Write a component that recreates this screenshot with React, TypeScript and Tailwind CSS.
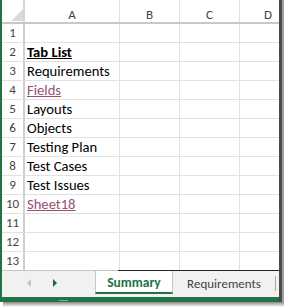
import React from "react";

const FONT = { fontFamily: "Carlito, 'Liberation Sans', Arial, sans-serif" };

type Cell = { text: string; kind?: "bold" | "link" };

const rows: Cell[] = [
  { text: "" },
  { text: "Tab List", kind: "bold" },
  { text: "Requirements" },
  { text: "Fields", kind: "link" },
  { text: "Layouts" },
  { text: "Objects" },
  { text: "Testing Plan" },
  { text: "Test Cases" },
  { text: "Test Issues" },
  { text: "Sheet18", kind: "link" },
  { text: "" },
  { text: "" },
  { text: "" },
];

function Row({ n, cell }: { n: number; cell: Cell }) {
  const cls =
    cell.kind === "bold"
      ? "font-bold underline text-black"
      : cell.kind === "link"
      ? "underline text-[#954f72] decoration-[#954f72]"
      : "text-black";
  return (
    <div className="flex h-[19px] shrink-0">
      <div className="w-[23px] shrink-0 border-r-2 border-b border-r-[#cfcfcf] border-b-[#e1e1e1] flex justify-center text-[13px] leading-[18px] text-[#444]">
        {n}
      </div>
      <div className={`w-[95px] shrink-0 border-r border-b border-[#e1e1e1] pl-[2px] text-[14.6px] leading-[18px] whitespace-nowrap overflow-visible ${cls}`}>
        {cell.text}
      </div>
      <div className="w-[60px] shrink-0 border-r border-b border-[#e1e1e1]" />
      <div className="w-[60px] shrink-0 border-r border-b border-[#e1e1e1]" />
      <div className="w-[39px] shrink-0 border-b border-[#e1e1e1]" />
    </div>
  );
}

export default function App() {
  return (
    <div className="w-[284px] h-[307px] bg-white flex flex-col overflow-hidden" style={FONT}>
      <div className="flex h-[302px]">
        <div className="w-[2px] bg-[#217346] shrink-0" />
        <div className="w-[277px] flex flex-col shrink-0">
          {/* grid */}
          <div className="h-[270px] overflow-hidden flex flex-col">
            <div className="flex h-[24px] shrink-0 border-b-2 border-[#c8c8c8] text-[13px] text-[#444]">
              <div className="w-[23px] shrink-0 border-r-2 border-[#d4d4d4] flex justify-end items-end pb-[1px]">
                <svg width="12" height="12" viewBox="0 0 12 12">
                  <polygon points="12,0 12,12 0,12" fill="#dadada" />
                </svg>
              </div>
              <div className="w-[95px] shrink-0 border-r border-[#e1e1e1] flex justify-center items-end leading-[15px]">A</div>
              <div className="w-[60px] shrink-0 border-r border-[#e1e1e1] flex justify-center items-end leading-[15px]">B</div>
              <div className="w-[60px] shrink-0 border-r border-[#e1e1e1] flex justify-center items-end leading-[15px]">C</div>
              <div className="w-[39px] shrink-0 flex items-end leading-[15px] pl-[24px]">D</div>
            </div>
            {rows.map((c, i) => (
              <Row key={i} n={i + 1} cell={c} />
            ))}
          </div>
          {/* tab bar */}
          <div className="h-[27px] shrink-0 bg-[#f1f1f1] flex flex-col">
            <div className="flex h-[1px] shrink-0">
              <div className="w-[116px] bg-[#c6c6c6]" />
              <div className="flex-1 bg-[#222]" />
            </div>
            <div className="flex flex-1">
              <div className="w-[93px] shrink-0 flex items-start pt-[8px]">
                <div className="ml-[25px] w-0 h-0 border-y-[4px] border-y-transparent border-r-[4px] border-r-[#c4c4c4]" />
                <div className="ml-[22px] w-0 h-0 border-y-[4px] border-y-transparent border-l-[4px] border-l-[#1e6b3f]" />
              </div>
              <div className="w-[78px] h-[23px] shrink-0 bg-white border-x border-[#c6c6c6] border-b-2 border-b-[#217346] flex justify-center items-center text-[13.5px] font-bold text-[#217346] leading-[15px] pt-[1px]">
                Summary
              </div>
              <div className="w-[103px] h-[23px] shrink-0 flex items-center">
                <div className="flex-1 text-center text-[13px] text-[#444] leading-[15px] pt-[2px]">Requirements</div>
                <div className="w-[1px] h-[15px] bg-[#a8a8a8] mt-[2px]" />
              </div>
            </div>
          </div>
          <div className="h-[5px] shrink-0 bg-[#217346] flex">
            <div className="ml-[57px] mt-[3px] w-[9px] h-[1px] bg-[#7fae92]" />
          </div>
        </div>
        <div className="w-[5px] shrink-0 flex">
          <div className="w-[3px] bg-[#4a4a4a]" />
          <div className="w-[2px] bg-[#a0a0a0]" />
        </div>
      </div>
      <div className="h-[5px] ml-[3px] bg-gradient-to-b from-[#8a8a8a] to-white" />
    </div>
  );
}
